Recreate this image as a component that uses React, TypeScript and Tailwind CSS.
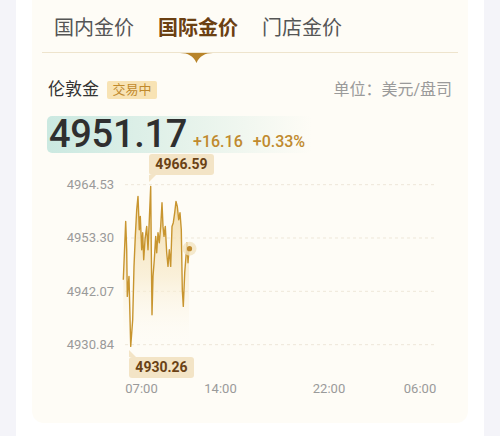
const pts: [number, number][] = [
  [123.3, 280], [125.7, 221.7], [126.7, 250], [127.3, 296.7], [129, 276.7], [130.7, 346.7],
  [132.7, 320], [134, 266.7], [135.3, 236.7], [136.7, 210], [138, 196.7], [139.3, 230],
  [140.3, 216.7], [141.7, 250], [142.7, 233], [143.7, 260], [145, 240], [146.7, 226.7],
  [148, 250], [149.3, 220], [150.7, 186.7], [151.3, 250], [152, 315], [153, 276.7],
  [154.3, 260], [155.7, 236.7], [156.7, 253], [158, 233], [159.3, 243], [160.7, 226.7],
  [162, 203], [163, 226.7], [164, 236.7], [165.3, 226.7], [166.7, 253], [168, 266.7],
  [169.3, 250], [170.7, 266.7], [172, 226.7], [173.3, 223], [174.7, 213], [176, 201.7],
  [177.3, 206.7], [178.7, 220], [180, 213], [181.3, 230], [182.3, 290], [183.3, 306.7],
  [184.7, 273], [186, 256.7], [187, 243], [188, 263], [189, 250],
];

// page coords -> svg coords
const X0 = 124;
const Y0 = 158.33;
const line = pts.map(([x, y]) => `${(x - X0).toFixed(1)},${(y - Y0).toFixed(1)}`).join(" ");
const area = `M${(pts[0][0] - X0).toFixed(1)},213 L${line.split(" ").join(" L")} L${(pts[pts.length - 1][0] - X0).toFixed(1)},213 Z`;

const yLabels = ["4964.53", "4953.30", "4942.07", "4930.84"];

function Tip({ value, tail }: { value: string; tail: "top" | "bottom" }) {
  return (
    <div className="relative">
      {tail === "top" && (
        <svg width="7" height="7" className="absolute left-0 top-[-7px]">
          <polygon points="0,0 7,7 0,7" fill="#f3e4c6" />
        </svg>
      )}
      <div className="h-[21px] w-[65px] rounded-[3px] bg-[#f3e4c6] flex items-center justify-center text-[14px] font-bold text-[#6a4215]">
        {value}
      </div>
      {tail === "bottom" && (
        <svg width="7" height="7" className="absolute left-0 bottom-[-7px]">
          <polygon points="0,0 7,0 0,7" fill="#f3e4c6" />
        </svg>
      )}
    </div>
  );
}

export default function App() {
  return (
    <div
      className="w-[500px] h-[436px] overflow-hidden bg-[#f4f4f9] px-4"
      style={{ fontFamily: 'Roboto, "Noto Sans CJK SC", sans-serif' }}
    >
      <div className="h-full bg-white px-4">
        <div className="h-[423px] rounded-b-xl bg-[#fefcf6]">
          {/* tabs */}
          <div className="flex gap-6 px-[22px] pt-[14px] pb-[10px] text-[20px] leading-[28px]">
            <span className="w-[80px] text-[#555]">国内金价</span>
            <span className="w-[80px] font-bold text-[#6b4012]">国际金价</span>
            <span className="w-[80px] text-[#555]">门店金价</span>
          </div>
          <div className="mx-[10px] h-px bg-[#eee4cd]" />
          <svg width="33" height="10" viewBox="0 0 33 10" className="ml-[148px] block">
            <path d="M0 0 H33 C25 0 19.5 3 16.5 10 C13.5 3 8 0 0 0 Z" fill="#b8842a" />
          </svg>

          {/* title row */}
          <div className="mt-[17px] flex h-[20px] items-center justify-between px-4">
            <div className="flex items-center gap-2">
              <span className="text-[17px] text-[#333]">伦敦金</span>
              <span className="flex h-[18px] w-[50px] items-center justify-center rounded-[2px] bg-[#f8e3b4] text-[13px] text-[#c18a2c]">
                交易中
              </span>
            </div>
            <span className="text-[16px] text-[#9a9a9a]">单位：美元/盘司</span>
          </div>

          {/* price */}
          <div className="ml-[15px] mt-4 flex h-[37px] w-[265px] items-baseline rounded-[5px] bg-gradient-to-r from-[#cbe9e1] via-[#e4f2ea] to-[#fefcf6] pl-[2px]">
            <span className="text-[38px] font-medium leading-[37px] tracking-[-0.3px] text-[#2f2f2f]">4951.17</span>
            <span className="ml-[6px] text-[16px] font-medium text-[#c08a2e]">+16.16</span>
            <span className="ml-[10px] text-[16px] font-medium text-[#c08a2e]">+0.33%</span>
          </div>

          {/* chart */}
          <div className="relative mt-[5px] flex">
            <div className="flex w-[82px] flex-col items-end">
              {yLabels.map((l) => (
                <div key={l} className="flex h-[53.33px] items-center text-[13px] text-[#9a9a9a]">
                  {l}
                </div>
              ))}
            </div>
            <svg width="316" height="213" viewBox="0 0 316 213" className="ml-[10px] block overflow-visible">
              <defs>
                <linearGradient id="fill" x1="0" y1="30" x2="0" y2="190" gradientUnits="userSpaceOnUse">
                  <stop offset="0" stopColor="#f0d497" stopOpacity="0.9" />
                  <stop offset="0.55" stopColor="#f7e8c6" stopOpacity="0.6" />
                  <stop offset="1" stopColor="#fefcf6" stopOpacity="0" />
                </linearGradient>
              </defs>
              {[26.67, 80, 133.33, 186.67].map((y) => (
                <line key={y} x1="1" x2="313" y1={y} y2={y} stroke="#eee7d9" strokeWidth="1" strokeDasharray="3 3" />
              ))}
              <path d={area} fill="url(#fill)" />
              <polyline points={line} fill="none" stroke="#c8952f" strokeWidth="1.4" strokeLinejoin="round" />
              <circle cx={189.5 - X0} cy={249 - Y0} r="7" fill="#f2e3c2" opacity="0.8" />
              <circle cx={189.5 - X0} cy={249 - Y0} r="2.6" fill="#c08a2e" />
            </svg>
            <div className="absolute left-[117px] top-[-4px]">
              <Tip value="4966.59" tail="bottom" />
            </div>
            <div className="absolute left-[97px] top-[199px]">
              <Tip value="4930.26" tail="top" />
            </div>
          </div>

          {/* x axis */}
          <div className="mt-[10px] flex pl-[89.5px] text-[13px] leading-4 text-[#9a9a9a]">
            <span className="w-[40px] text-center">07:00</span>
            <span className="ml-[39px] w-[40px] text-center">14:00</span>
            <span className="ml-[68.5px] w-[40px] text-center">22:00</span>
            <span className="ml-[51px] w-[40px] text-center">06:00</span>
          </div>
        </div>
      </div>
    </div>
  );
}
